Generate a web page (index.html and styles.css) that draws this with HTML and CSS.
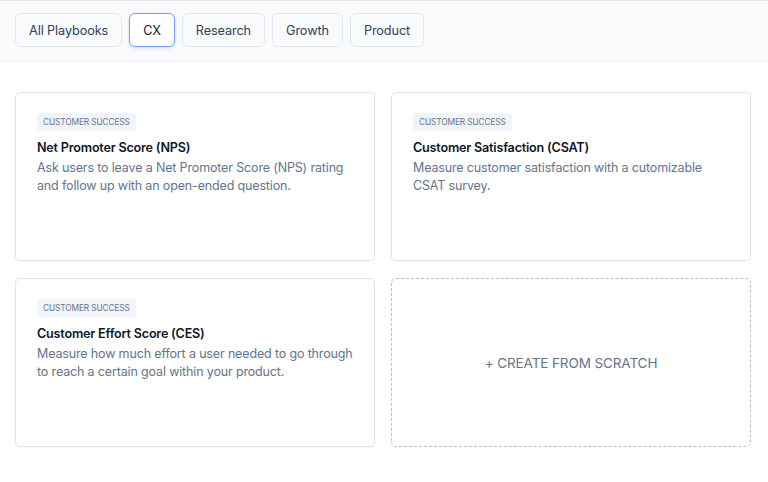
FILE: index.html
```html
<!DOCTYPE html>
<html lang="en">
<head>
    <meta charset="UTF-8">
    <title>Playbooks</title>
    <link rel="stylesheet" href="styles.css">
</head>
<body>
<div class="filter-bar">
    <button class="filter">All Playbooks</button>
    <button class="filter active">CX</button>
    <button class="filter">Research</button>
    <button class="filter">Growth</button>
    <button class="filter">Product</button>
</div>
<div class="playbooks">
    <div class="card">
        <span class="tag">Customer Success</span>
        <h3>Net Promoter Score (NPS)</h3>
        <p>Ask users to leave a Net Promoter Score (NPS) rating and follow up with an open-ended question.</p>
    </div>
    <div class="card">
        <span class="tag">Customer Success</span>
        <h3>Customer Satisfaction (CSAT)</h3>
        <p>Measure customer satisfaction with a cutomizable CSAT survey.</p>
    </div>
    <div class="card">
        <span class="tag">Customer Success</span>
        <h3>Customer Effort Score (CES)</h3>
        <p>Measure how much effort a user needed to go through to reach a certain goal within your product.</p>
    </div>
    <div class="card scratch">+ Create from scratch</div>
</div>
</body>
</html>
```

FILE: styles.css
```css
body {
    font-family: Inter, 'Liberation Sans', Arial, sans-serif;
    margin: 0;
    background: #fff;
    color: #0f172a;
}
.filter-bar {
    display: flex;
    gap: 7px;
    padding: 12px 15px 14px;
    background-color: #f8fafc;
    border-top: 1px solid #e5e9f0;
    border-bottom: 1px solid #eef1f5;
}
.filter {
    font-family: inherit;
    font-size: 12.7px;
    letter-spacing: -0.1px;
    color: #334155;
    background-color: #f8fafc;
    border: 1px solid #e2e8f0;
    border-radius: 6px;
    height: 34px;
    padding: 0 13px;
    cursor: pointer;
}
.filter.active {
    background-color: #fff;
    color: #0f172a;
    border-color: #7c9cf5;
    box-shadow: 0 1px 3px rgba(99, 102, 241, 0.25);
}
.playbooks {
    display: grid;
    grid-template-columns: 360px 360px;
    grid-auto-rows: 169px;
    column-gap: 16px;
    row-gap: 17px;
    padding: 30px 15px;
}
.card {
    border: 1px solid #dfe4eb;
    border-radius: 5px;
    padding: 20px 21px;
    box-sizing: border-box;
    background: #fff;
    box-shadow: 0 1px 2px rgba(15, 23, 42, 0.04);
    display: flex;
    flex-direction: column;
    align-items: flex-start;
}
.tag {
    background-color: #f1f5f9;
    color: #64748b;
    font-size: 8.3px;
    letter-spacing: -0.1px;
    line-height: 12px;
    text-transform: uppercase;
    padding: 3px 6px;
    border-radius: 3px;
}
.card h3 {
    margin: 9px 0 3px;
    font-size: 12.6px;
    letter-spacing: -0.2px;
    line-height: 16px;
    font-weight: 600;
    color: #0f172a;
}
.card p {
    margin: 0;
    font-size: 12.5px;
    letter-spacing: -0.15px;
    line-height: 17.5px;
    color: #64748b;
}
.scratch {
    border: 1px dashed #b4bfcd;
    box-shadow: none;
    justify-content: center;
    align-items: center;
    font-size: 13.5px;
    letter-spacing: -0.1px;
    text-transform: uppercase;
    color: #64748b;
    cursor: pointer;
}
```
